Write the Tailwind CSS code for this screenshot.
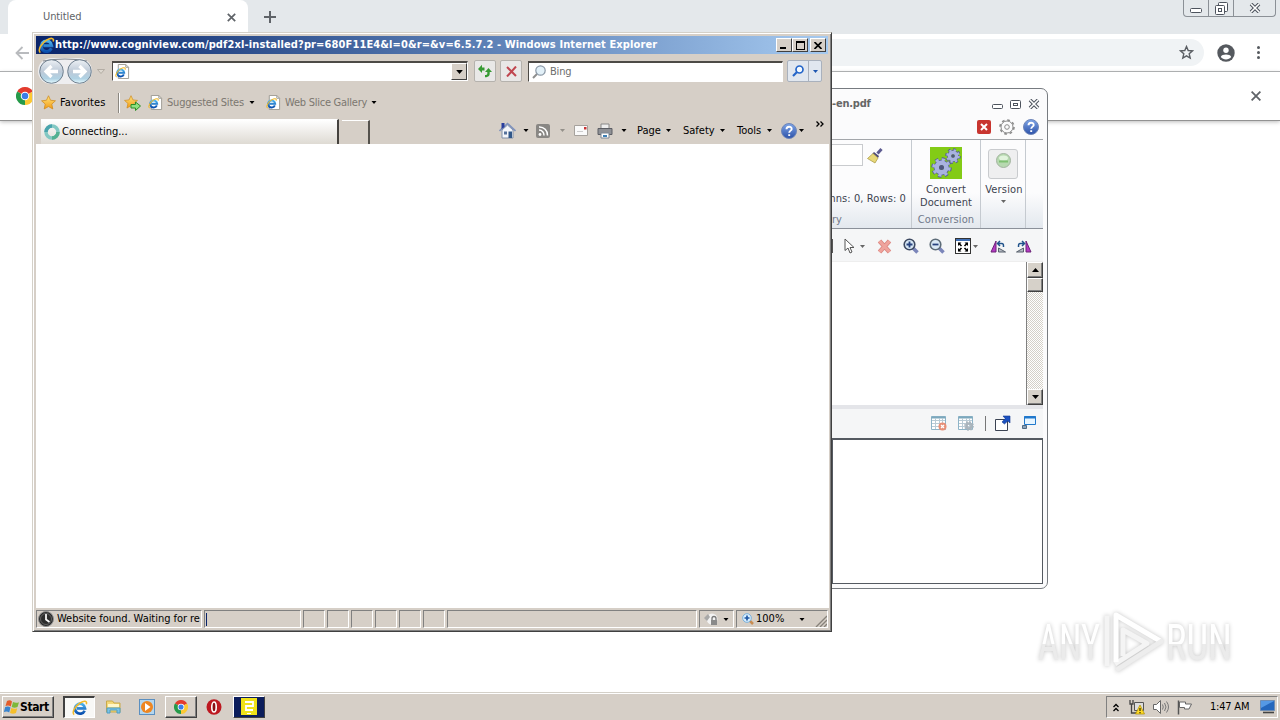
<!DOCTYPE html>
<html lang="en">
<head>
  <meta charset="UTF-8" />
  <meta name="viewport" content="width=device-width, initial-scale=1.0" />
  <title>Desktop</title>
  <script src="https://cdn.jsdelivr.net/npm/@tailwindcss/browser@4"></script>
</head>

<body class="relative w-[1280px] h-[720px] overflow-hidden bg-white text-black whitespace-nowrap font-['DejaVu_Sans_Condensed','DejaVu_Sans',sans-serif] font-stretch-condensed text-[11px] leading-[14px]">

  <!-- Shared icons -->
  <svg class="absolute size-0">
    <defs>
      <linearGradient id="gBlue" x1="0" y1="0" x2="0" y2="1"><stop offset="0" stop-color="#4db4ee" /><stop offset="1" stop-color="#0a4fae" /></linearGradient>
      <linearGradient id="gNav" x1="0" y1="0" x2="0" y2="1"><stop offset="0" stop-color="#edf1f5" /><stop offset=".5" stop-color="#bdc9d7" /><stop offset=".8" stop-color="#b0d2e4" /><stop offset="1" stop-color="#e6fbff" /></linearGradient>
      <linearGradient id="gStar" x1="0" y1="0" x2="0" y2="1"><stop offset="0" stop-color="#ffe680" /><stop offset="1" stop-color="#f39a12" /></linearGradient>
      <linearGradient id="gHelp" x1="0" y1="0" x2="0" y2="1"><stop offset="0" stop-color="#7ea5e8" /><stop offset="1" stop-color="#2c51a8" /></linearGradient>
      <symbol id="e" viewBox="0 0 16 16">
        <path d="M12.6 10.7A5 5 0 1 1 13 8.3H5" fill="none" stroke="url(#gBlue)" stroke-width="2.8" />
        <path d="M2.2 14.6C-.5 12.500 3 6 8 3c4-2.400 7.500-2.400 6.300 1.200" fill="none" stroke="#f0b92a" stroke-width="1.500" />
      </symbol>
      <symbol id="page-e" viewBox="0 0 16 16">
        <path d="M3.500.5h8l3 3v12h-11z" fill="#fff" stroke="#9c9a92" />
        <path d="M11.500.5v3h3" fill="none" stroke="#9c9a92" />
        <use href="#e" x="0" y="3" width="12" height="12" />
      </symbol>
      <symbol id="star" viewBox="0 0 16 16">
        <path d="M8 .8l2.200 4.800 5.200.6-3.900 3.500 1.100 5.200L8 12.300l-4.600 2.600 1.100-5.200L.6 6.200l5.200-.6z" fill="url(#gStar)" stroke="#cf8a1c" stroke-width=".8" />
      </symbol>
      <symbol id="chrome" viewBox="0 0 16 16">
        <path d="M8 8L1.070 4A8 8 0 0 1 14.930 4z" fill="#e33b2e" />
        <path d="M8 8L14.930 4A8 8 0 0 1 8 16z" fill="#fcc934" />
        <path d="M8 8v8A8 8 0 0 1 1.070 4z" fill="#269a4a" />
        <circle cx="8" cy="8" r="3.800" fill="#fff" /><circle cx="8" cy="8" r="2.900" fill="#3b7de8" />
      </symbol>
      <symbol id="down" viewBox="0 0 5 3"><path d="M0 0h5L2.500 3z" fill="currentColor" /></symbol>
      <symbol id="help" viewBox="0 0 16 16">
        <circle cx="8" cy="8" r="7.500" fill="url(#gHelp)" stroke="#6f86b8" />
        <path d="M5.500 6.200c0-3.400 5.200-3.200 5.200-.3 0 1.700-2.500 1.800-2.500 3.900M8.200 11.200v1.800" fill="none" stroke="#fff" stroke-width="1.900" />
      </symbol>
      <symbol id="gear" viewBox="0 0 16 16">
        <circle cx="8" cy="8" r="6.600" fill="none" stroke="currentColor" stroke-width="2.400" stroke-dasharray="2.600 2.580" />
        <circle cx="8" cy="8" r="4" fill="none" stroke="currentColor" stroke-width="4" />
      </symbol>
      <symbol id="table" viewBox="0 0 16 16">
        <path d="M.5 1.500h14v13h-14z" fill="#fff" stroke="#8db4c8" />
        <path d="M.5 2.500h14" stroke="#7ca8bd" stroke-width="2" />
        <path d="M1 5.500h13M1 8.500h13M1 11.500h13M4.500 3v11M8.500 3v11M11.500 3v11" stroke="#b9cbd5" />
      </symbol>
    </defs>
  </svg>

  <!-- Browser in the background -->
  <div class="absolute inset-0 flex flex-col">
    <div class="flex h-[34px] bg-[#e4e8eb]">
      <div class="ml-2 flex w-60 items-center rounded-t-lg bg-white pl-[35px] text-[#606367]">
        <span class="w-[184px] tracking-[-0.1px]">Untitled</span>
        <svg class="size-[9px]" viewBox="0 0 9 9"><path d="M.8.8l7.400 7.400M8.200.8L.8 8.200" stroke="#5f6368" stroke-width="1.700" /></svg>
      </div>
      <svg class="mt-[11px] ml-4 size-3" viewBox="0 0 12 12"><path d="M6 0v12M0 6h12" stroke="#5f6368" stroke-width="2" /></svg>
      <!-- Caption buttons -->
      <div class="ml-auto mr-1 flex h-[17px] w-[93px] rounded-b border border-t-0 border-[#8b9096]">
        <div class="flex w-[25px] items-end justify-center border-r border-[#8b9096] pb-[3px]"><svg class="h-[5px] w-3" viewBox="0 0 12 5"><rect x=".5" y=".5" width="11" height="4" rx="1" fill="#fff" stroke="#4d535d" /></svg></div>
        <div class="flex w-[25px] items-center justify-center border-r border-[#8b9096]"><svg class="size-[13px]" viewBox="0 0 13 13" fill="#fff" stroke="#4d535d"><rect x="3.500" y=".5" width="9" height="9" rx="1" /><rect x=".5" y="3.500" width="9" height="9" rx="1" /><rect x="3.500" y="6.500" width="3" height="3" /></svg></div>
        <div class="flex flex-1 items-center justify-center"><svg class="h-[10px] w-3" viewBox="0 0 12 10"><path d="M2 1l8 8M10 1L2 9" stroke="#4d535d" stroke-width="3.600" /><path d="M2 1l8 8M10 1L2 9" stroke="#fff" stroke-width="1.600" /></svg></div>
      </div>
    </div>
    <div class="flex h-[38px] items-center border-b border-[#a9abad] bg-white pl-[15px]">
      <svg class="h-[14px] w-[14px]" viewBox="0 0 14 14"><path d="M14 7H1.500M7.500 1L1.500 7l6 6" fill="none" stroke="#b9bbbe" stroke-width="1.800" /></svg>
      <div class="ml-20 flex h-[27px] flex-1 items-center justify-end rounded-full bg-[#f0f3f5] pr-[10px]">
        <svg class="size-[15px]" viewBox="0 0 15 15"><path d="M7.500 1.500l1.700 4 4.300.4-3.300 2.900 1 4.300-3.700-2.300-3.700 2.300 1-4.300L1.500 5.900l4.300-.4z" fill="none" stroke="#5a5e63" stroke-width="1.400" /></svg>
      </div>
      <svg class="ml-[13px] size-[18px]" viewBox="0 0 18 18"><circle cx="9" cy="9" r="8.700" fill="#55595e" /><circle cx="9" cy="6.300" r="2.700" fill="#fff" /><path d="M3.800 12.900c1-3.200 9.400-3.200 10.400 0-2.400 3.300-8 3.300-10.400 0z" fill="#fff" /></svg>
      <svg class="mr-5 ml-[22px] h-[13px] w-[3px]" viewBox="0 0 3 13" fill="#55595e"><circle cx="1.500" cy="1.500" r="1.500" /><circle cx="1.500" cy="6.500" r="1.500" /><circle cx="1.500" cy="11.500" r="1.500" /></svg>
    </div>
    <div class="flex h-[49px] items-center border-b border-[#929292] bg-white pl-4 shadow-[0_1px_4px_#bbb]">
      <svg class="size-[18px]"><use href="#chrome" /></svg>
      <svg class="mr-[19px] ml-auto size-[10px]" viewBox="0 0 10 10"><path d="M.6.6l8.800 8.800M9.400.6L.6 9.400" stroke="#5f6368" stroke-width="1.800" /></svg>
    </div>
  </div>

  <!-- PDF converter window -->
  <section class="absolute top-[88px] left-[800px] flex h-[501px] w-[248px] flex-col rounded-[7px] border border-[#777b80] bg-[#fbfbfc] pl-[31px] text-[#3c4350]">
    <div class="flex h-[29px] items-center pt-px text-[#666]">
      <span class="w-[160px] font-bold tracking-[-0.2px]">-en.pdf</span>
      <svg class="mt-1 h-[5px] w-[11px]" viewBox="0 0 11 5"><rect x=".5" y=".5" width="10" height="4" rx="1" fill="#fff" stroke="#4d535d" /></svg>
      <svg class="ml-[7px] h-[9px] w-[11px]" viewBox="0 0 11 9" fill="#fff" stroke="#4d535d"><rect x=".5" y=".5" width="10" height="8" rx="1" /><rect x="3.500" y="3.500" width="4" height="2" /></svg>
      <svg class="ml-[7px] h-[10px] w-[12px]" viewBox="0 0 12 10"><path d="M2 1l8 8M10 1L2 9" stroke="#4d535d" stroke-width="3.600" /><path d="M2 1l8 8M10 1L2 9" stroke="#fff" stroke-width="1.600" /></svg>
    </div>
    <div class="mr-1 flex h-[22px] items-center border-b border-[#a3a6aa] pb-1 pl-[145px]">
      <svg class="h-[14px] w-[14px]" viewBox="0 0 14 14"><rect width="14" height="14" rx="2" fill="#c8352f" /><path d="M4 4l6 6M10 4l-6 6" stroke="#fff" stroke-width="2" /></svg>
      <svg class="ml-2 size-4" viewBox="0 0 16 16" fill="none" stroke="#8a8a8a"><circle cx="8" cy="8" r="7" stroke-width="1.600" stroke-dasharray="2.750 2.750" /><circle cx="8" cy="8" r="6" /><circle cx="8" cy="8" r="2.300" /></svg>
      <svg class="ml-2 size-4"><use href="#help" /></svg>
    </div>
    <!-- Ribbon -->
    <div class="mr-1 flex h-[89px] border-b border-[#8b9099] bg-linear-to-b from-[#fcfcfd] from-60% to-[#e3e8ee]">
      <div class="flex w-[80px] flex-col border-r border-[#c5cad0]">
        <div class="flex h-[47px] items-start pt-1">
          <div class="h-[22px] w-[31px] border border-l-0 border-[#c9cbce] bg-white"></div>
          <svg class="mt-1 ml-1 size-4" viewBox="0 0 16 16"><path d="M10.500 5.500l4-4.500" stroke="#5c5a90" stroke-width="3" /><path d="M7 4l5 4-1 2-5.500-4.500z" fill="#4f4a78" /><path d="M6 5.500l5 4.500-3 5-7.500-4.500z" fill="#e8d878" stroke="#a59540" stroke-width=".7" /></svg>
        </div>
        <div class="flex h-[24px] justify-end pt-[5px] pr-[5px]"><span class="tracking-[0.1px]">Columns: 0, Rows: 0</span></div>
        <span class="mt-[2px] text-[#71798a]">ry</span>
      </div>
      <div class="flex w-[69px] flex-col items-center border-r border-[#c5cad0] pt-[7px]">
        <svg class="size-8 bg-[#83cb16] text-[#a9b3e0]" viewBox="0 0 32 32"><use href="#gear" x="1" y="10" width="21" height="21" color="#555d92" /><use href="#gear" x="2" y="11" width="19" height="19" /><circle cx="11.500" cy="20.500" r="2.500" fill="#4f5680" /><use href="#gear" x="15" y="1" width="16" height="16" color="#555d92" /><use href="#gear" x="16" y="2" width="14" height="14" /><circle cx="23" cy="9" r="1.800" fill="#4f5680" /></svg>
        <span class="mt-[4px] text-center leading-[13px] tracking-[0.1px]">Convert<br />Document</span>
        <span class="mt-[4px] tracking-[0.1px] text-[#71798a]">Conversion</span>
      </div>
      <div class="flex w-[45px] flex-col items-center border-r border-[#c5cad0] pt-[9px]">
        <div class="flex h-[30px] w-[30px] justify-center rounded-[3px] border border-[#c9cbce] bg-[#efeff0] pt-[3px]"><svg class="size-[15px]" viewBox="0 0 15 15"><circle cx="7.500" cy="7.500" r="7" fill="#b7d9b0" stroke="#a3b3a0" /><ellipse cx="7.500" cy="5" rx="4.500" ry="2.500" fill="#e1f3dc" /><path d="M3 8.500h9" stroke="#7fc072" stroke-width="2" /></svg></div>
        <span class="mt-[4px] ml-[2px] leading-[13px] tracking-[0.2px]">Version</span>
        <svg class="mt-1 h-[3px] w-[5px] text-[#666]"><use href="#down" /></svg>
      </div>
      <div class="flex-1"></div>
    </div>
    <!-- View tools -->
    <div class="mr-1 flex h-[33px] items-center border-b border-[#eee] bg-[#f5f6f7] pt-[2px]">
      <div class="h-[14px] w-px bg-[#555]"></div>
      <svg class="ml-[11px] h-4 w-[12px]" viewBox="0 0 12 16"><path d="M1 1v11.500l3-2.500 2 5 2-1-2-4.500h4z" fill="#fff" stroke="#555" /></svg>
      <svg class="ml-1 h-[3px] w-[5px] text-[#666]"><use href="#down" /></svg>
      <svg class="ml-[12px] size-[15px]" viewBox="0 0 15 15"><path d="M2.500 2l10 11M12.500 2l-10 11" stroke="#d98680" stroke-width="4.600" /><path d="M2.500 2l10 11M12.500 2l-10 11" stroke="#efa39c" stroke-width="3" /></svg>
      <svg class="ml-[11px] size-4" viewBox="0 0 16 16"><path d="M10 10l4.500 4.500" stroke="#7b86ba" stroke-width="3.500" /><circle cx="6.500" cy="6.500" r="5.300" fill="#d9e9f6" stroke="#3e4a62" stroke-width="1.600" /><path d="M3.500 6.500h6M6.500 3.500v6" stroke="#27427e" stroke-width="1.800" /></svg>
      <svg class="ml-[10px] size-4" viewBox="0 0 16 16"><path d="M10 10l4.500 4.500" stroke="#7b86ba" stroke-width="3.500" /><circle cx="6.500" cy="6.500" r="5.300" fill="#d9e9f6" stroke="#5d6c78" stroke-width="1.600" /><path d="M3.500 6.500h6" stroke="#27427e" stroke-width="1.800" /></svg>
      <svg class="ml-[10px] size-4" viewBox="0 0 16 16"><rect x=".5" y=".5" width="15" height="15" fill="#fff" stroke="#333" /><path d="M1 2h14" stroke="#3f6fb5" stroke-width="2" /><path d="M3 4.500h3.500L3 8zM13 4.500H9.500L13 8zM3 13.500h3.500L3 10zM13 13.500H9.500L13 10z" fill="#000" /><path d="M3.500 5l3 3M12.500 5l-3 3M3.500 13l3-3M12.500 13l-3-3" stroke="#000" stroke-width="1.600" /></svg>
      <svg class="ml-[2px] h-[3px] w-[5px] text-[#666]"><use href="#down" /></svg>
      <svg class="ml-[12px] h-[13px] w-4" viewBox="0 0 16 13"><path d="M6 1v11H1z" fill="#b53ac4" stroke="#6b2477" /><path d="M8.500 12h7l-7-4z" fill="#b6bcc5" stroke="#59616d" /><path d="M8 3.500h3.500c2 0 2 1 2 3.500M10 1L7.500 3.500 10 6" fill="none" stroke="#21538b" stroke-width="1.500" /></svg>
      <svg class="ml-[10px] h-[13px] w-4" viewBox="0 0 16 13"><path d="M10 1v11h5z" fill="#b53ac4" stroke="#6b2477" /><path d="M7.500 12h-7l7-4z" fill="#b6bcc5" stroke="#59616d" /><path d="M8 3.500H4.500c-2 0-2 1-2 3.500M6 1l2.500 2.500L6 6" fill="none" stroke="#21538b" stroke-width="1.500" /></svg>
    </div>
    <div class="mr-1 flex h-[143px] bg-white">
      <div class="ml-auto flex w-[17px] flex-col justify-between border-l border-[#808080] bg-[repeating-conic-gradient(#d4d0c8_0_25%,#ffffff_0_50%)] bg-[length:2px_2px]">
        <div>
          <div class="flex h-4 items-center justify-center border border-t-white border-r-[#404040] border-b-[#404040] border-l-white bg-[#d6d1c9] shadow-[inset_-1px_-1px_#808080]"><svg class="h-1 w-[7px]" viewBox="0 0 7 4"><path d="M0 4h7L3.500 0z" /></svg></div>
          <div class="h-[14px] border border-t-white border-r-[#404040] border-b-[#404040] border-l-white bg-[#d6d1c9] shadow-[inset_-1px_-1px_#808080]"></div>
        </div>
        <div class="flex h-4 items-center justify-center border border-t-white border-r-[#404040] border-b-[#404040] border-l-white bg-[#d6d1c9] shadow-[inset_-1px_-1px_#808080]"><svg class="h-1 w-[7px]" viewBox="0 0 7 4"><path d="M0 0h7L3.500 4z" /></svg></div>
      </div>
    </div>
    <div class="mr-1 flex h-[33px] items-center border-t-4 border-[#e4e5e9] bg-[#f5f6f7] pb-px pl-[99px]">
      <svg class="size-4" viewBox="0 0 16 16"><use href="#table" width="16" height="16" /><circle cx="11.500" cy="11.500" r="4" fill="#e79078" /><path d="M10 10l3 3M13 10l-3 3" stroke="#fff" stroke-width="1.300" /></svg>
      <svg class="ml-[11px] size-4 text-[#a9b4bc]" viewBox="0 0 16 16"><use href="#table" width="16" height="16" /><use href="#gear" x="6" y="6" width="10" height="10" /></svg>
      <div class="ml-[11px] h-[15px] w-px bg-[#777]"></div>
      <svg class="ml-[9px] size-4" viewBox="0 0 16 16"><path d="M.5 4.500h12v11H.5z" fill="#fff" stroke="#3b4353" /><path d="M8 1h7v7l-2.200-2-3.300 3L7 7l3.200-3.500z" fill="#1c51c0" stroke="#123a91" stroke-width=".6" /></svg>
      <svg class="ml-[11px] size-[14px]" viewBox="0 0 14 14"><path d="M2.500.5h11v8h-11z" fill="#e7f5ff" stroke="#2179cc" /><path d="M2 1.500h12" stroke="#2179cc" stroke-width="2" /><path d="M.5 9.500h4v3h-4z" fill="#8ba5bc" stroke="#526b82" /></svg>
    </div>
    <div class="mr-1 h-[146px] border border-t-2 border-[#555a61] bg-white"></div>
  </section>

  <!-- ANY.RUN watermark -->
  <div class="absolute top-[606px] left-[1036px] flex h-[72px] w-[204px] items-center">
    <svg class="h-[72px] w-[204px] drop-shadow-[0_0_2px_#c4c4c4]" viewBox="0 0 204 72">
      <defs><linearGradient id="wm" x1="0" y1="0" x2="0" y2="1"><stop offset=".52" stop-color="#fff" /><stop offset=".52" stop-color="#ebebeb" /></linearGradient></defs>
      <g fill="url(#wm)" font-family="Roboto" font-weight="400" font-size="50">
        <text x="2" y="54" textLength="62" lengthAdjust="spacingAndGlyphs">ANY</text>
        <text x="130" y="54" textLength="66" lengthAdjust="spacingAndGlyphs">RUN</text>
      </g>
      <path d="M67 60V9.500M83 50V24L107 37.500 75 58" fill="none" stroke="#f4f4f4" stroke-width="5" stroke-linejoin="round" transform="translate(4 0)" />
      <path d="M80 56V9L125 35.500" fill="none" stroke="#fff" stroke-width="5" stroke-linejoin="round" />
      <path d="M125 35.500L82 63" fill="none" stroke="#ededed" stroke-width="5" stroke-linecap="round" />
    </svg>
  </div>

  <!-- Internet Explorer window -->
  <section class="absolute top-[32px] left-[32px] flex h-[600px] w-[800px] flex-col border border-t-[#d4d0c8] border-r-[#404040] border-b-[#404040] border-l-[#d4d0c8] bg-[#d6cfc7] p-[3px] shadow-[inset_1px_1px_#ffffff,inset_-1px_-1px_#808080]">
    <div class="flex h-[18px] shrink-0 items-center bg-linear-to-r from-[#0a246a] to-[#a6caf0] pr-[2px] pl-[2px] text-white">
      <svg class="size-[17px]"><use href="#e" /></svg>
      <span class="font-bold tracking-[0.115px]">http://www.cogniview.com/pdf2xl-installed?pr=680F11E4&amp;l=0&amp;r=&amp;v=6.5.7.2 - Windows Internet Explorer</span>
      <div class="ml-auto flex text-black">
        <div class="flex h-[14px] w-4 items-end border border-t-white border-r-[#404040] border-b-[#404040] border-l-white bg-[#d6cfc7] pb-[2px] pl-[3px]"><div class="h-[2px] w-[6px] bg-black"></div></div>
        <div class="flex h-[14px] w-4 items-center justify-center border border-t-white border-r-[#404040] border-b-[#404040] border-l-white bg-[#d6cfc7]"><div class="h-[9px] w-[9px] border border-t-2 border-black"></div></div>
        <div class="ml-[2px] flex h-[14px] w-4 items-center justify-center border border-t-white border-r-[#404040] border-b-[#404040] border-l-white bg-[#d6cfc7]"><svg class="h-[7px] w-2" viewBox="0 0 8 7"><path d="M.5 0l7 7M7.500 0l-7 7" stroke="#000" stroke-width="1.700" /></svg></div>
      </div>
    </div>

    <!-- Address row -->
    <div class="flex h-[34px] shrink-0 items-center pl-[2px]">
      <svg class="h-[27px] w-[54px]" viewBox="0 0 54 27">
        <rect x="0" y="0" width="54" height="26" rx="13" fill="#eeeef0" /><path d="M5 3Q27 -1 49 3" fill="none" stroke="#85888e" />
        <circle cx="13.500" cy="13.500" r="11.800" fill="url(#gNav)" stroke="#70808f" /><circle cx="41.500" cy="13.500" r="11.800" fill="url(#gNav)" stroke="#70808f" />
        <path d="M20 13.500H9M13.500 8L8 13.500l5.500 5.500M35 13.500h11M41.500 8l5.500 5.500-5.500 5.500" fill="none" stroke="#fff" stroke-width="3.300" />
      </svg>
      <svg class="ml-[5px] h-[5px] w-2" viewBox="0 0 8 5"><path d="M.5.5h7L4 4.500z" fill="#ddd8d0" stroke="#a9a39b" stroke-width=".8" /></svg>
      <div class="ml-[7px] flex h-[20px] w-[356px] items-center border border-t-2 border-t-[#4d4a46] border-r-white border-b-white border-l-[#4d4a46] bg-white pl-[2px]">
        <svg class="size-[15px]"><use href="#page-e" /></svg>
        <div class="ml-auto flex h-[17px] w-4 items-center justify-center border border-t-white border-r-[#404040] border-b-[#404040] border-l-white bg-[#d6cfc7]"><svg class="h-1 w-[7px]"><use href="#down" /></svg></div>
      </div>
      <div class="ml-[6px] flex size-[22px] items-center justify-center rounded-[2px] border border-[#b5b2ad] bg-[#e9e8e7]"><svg class="h-[14px] w-4" viewBox="0 0 16 14"><path d="M1 5L5 .8V3.500h2.500v3H5V9z" fill="#379a33" /><path d="M15 8L11.500 4 8 8h2.300v1.500c0 1-.8 1.500-2.300 1.500v2.200c3.500 0 4.700-1.500 4.700-3.700V8z" fill="#379a33" /></svg></div>
      <div class="ml-[4px] flex size-[22px] items-center justify-center rounded-[2px] border border-[#b5b2ad] bg-[#e9e8e7]"><svg class="size-[11px]" viewBox="0 0 11 11"><path d="M1 1l9 9M10 .5l-9 10" stroke="#c04750" stroke-width="2" /></svg></div>
      <div class="ml-[6px] flex h-[21px] w-[255px] items-center border border-t-2 border-t-[#4d4a46] border-r-white border-b-white border-l-[#4d4a46] bg-white pl-[3px] text-[#6d6d6d]">
        <svg class="size-[14px]" viewBox="0 0 14 14"><path d="M5 9L1 13" stroke="#8e8e8e" stroke-width="2" /><circle cx="8.500" cy="5.500" r="4.700" fill="#e2f0f8" stroke="#8b98a6" stroke-width="1.200" /></svg>
        <span class="ml-1 tracking-[-0.2px]">Bing</span>
      </div>
      <div class="ml-[4px] flex h-[22px] w-[35px] rounded-[2px] border border-[#a9b1bd] bg-[#e1e7ef]">
        <div class="flex w-[21px] items-center justify-center border-r border-[#a9b1bd]"><svg class="size-3" viewBox="0 0 12 12"><path d="M5 7L1 11" stroke="#2465c9" stroke-width="2.200" /><circle cx="7.500" cy="4.500" r="3.500" fill="#f4faff" stroke="#2465c9" stroke-width="1.700" /></svg></div>
        <div class="flex flex-1 items-center justify-center text-[#1d56b0]"><svg class="h-[3px] w-[5px]"><use href="#down" /></svg></div>
      </div>
    </div>

    <!-- Favorites row -->
    <div class="flex h-[28px] shrink-0 items-center pt-px pl-[5px] text-[#7c7770]">
      <svg class="size-[15px]"><use href="#star" /></svg>
      <span class="ml-[4px] w-[58px] tracking-[0.1px] text-black">Favorites</span>
      <div class="h-5 w-[2px] border-l border-[#8b8780] bg-white"></div>
      <svg class="ml-[4px] h-4 w-[17px]" viewBox="0 0 17 16"><use href="#star" width="14" height="14" /><path d="M7 9.500h4.500V7l5 4-5 4.500V13H7z" fill="#8fe080" stroke="#2d8d26" /></svg>
      <svg class="ml-[7px] size-[15px]"><use href="#page-e" /></svg>
      <span class="ml-[4px] w-[82px] tracking-[-0.2px]">Suggested Sites</span>
      <svg class="h-[3px] w-[6px] text-black"><use href="#down" /></svg>
      <svg class="ml-[11px] size-[15px]"><use href="#page-e" /></svg>
      <span class="ml-[4px] w-[86px] tracking-[-0.25px]">Web Slice Gallery</span>
      <svg class="h-[3px] w-[6px] text-black"><use href="#down" /></svg>
    </div>

    <!-- Tabs and command bar -->
    <div class="flex h-[28px] shrink-0 items-end pl-[5px]">
      <div class="flex h-[25px] w-[298px] items-center border-t border-r-2 border-t-white border-r-[#45423e] bg-linear-to-b from-white to-[#dedad3] pl-[3px]">
        <svg class="size-4" viewBox="0 0 16 16"><circle cx="8" cy="8" r="6" fill="none" stroke="#83c8c3" stroke-width="3.500" /><path d="M2 8a6 6 0 0 1 6-6" fill="none" stroke="#4aa4ad" stroke-width="3.500" /><path d="M14 8a6 6 0 0 1-6 6" fill="none" stroke="#53b091" stroke-width="3.500" /></svg>
        <span class="ml-[2px]">Connecting...</span>
      </div>
      <div class="ml-[3px] h-[24px] w-[28px] border-t border-r-2 border-t-white border-r-[#55524d]"></div>
      <div class="ml-[129px] flex h-[27px] flex-1 items-center">
        <svg class="size-[17px]" viewBox="0 0 17 17"><path d="M3 8v8h11V8L8.500 3z" fill="#f4f6fa" stroke="#8190a8" /><path d="M.5 9L8.500 1.500 16.500 9" fill="none" stroke="#8093bd" stroke-width="1.600" /><path d="M2.500 1h3v4l-3 2z" fill="#293e9e" /><path d="M9.500 9.500h3.500V16H9.500z" fill="#315789" /><path d="M5 9.500h3v3H5z" fill="#56719b" /></svg>
        <svg class="ml-[7px] h-[3px] w-[6px]"><use href="#down" /></svg>
        <svg class="ml-[7px] size-[14px]" viewBox="0 0 14 14"><rect width="14" height="14" rx="2" fill="#898784" /><path d="M3 6a5 5 0 0 1 5 5.500M3 3a8 8 0 0 1 8.500 8.500" fill="none" stroke="#fff" stroke-width="1.500" /><circle cx="4" cy="10.500" r="1.400" fill="#fff" /></svg>
        <svg class="ml-[10px] h-[3px] w-[5px] text-[#94908a]"><use href="#down" /></svg>
        <svg class="ml-[9px] h-[11px] w-[14px]" viewBox="0 0 14 11"><path d="M.5.5h13v10H.5z" fill="#fafafa" stroke="#a6a29d" /><path d="M10 2h2.500v2.500H10z" fill="#c93434" /><path d="M3 6.500h6" stroke="#ccc" /></svg>
        <svg class="ml-[9px] h-4 w-4" viewBox="0 0 16 16"><path d="M4 1h8v5H4z" fill="#eee" stroke="#888" /><path d="M1 5.500h14v6H1z" fill="#8f9196" stroke="#5c5e64" /><path d="M4 10h8v5H4z" fill="#fff" stroke="#7d8794" /><path d="M6 12h4v2H6z" fill="#3d7fb5" /></svg>
        <svg class="ml-[8px] h-[3px] w-[6px]"><use href="#down" /></svg>
        <span class="ml-[10px] w-[29px]">Page</span><svg class="h-[3px] w-[5px]"><use href="#down" /></svg>
        <span class="ml-[12px] w-[37px]">Safety</span><svg class="h-[3px] w-[5px]"><use href="#down" /></svg>
        <span class="ml-[12px] w-[30px]">Tools</span><svg class="h-[3px] w-[5px]"><use href="#down" /></svg>
        <svg class="ml-[9px] size-4"><use href="#help" /></svg>
        <svg class="ml-[2px] h-[3px] w-[5px]"><use href="#down" /></svg>
        <svg class="mt-[-13px] ml-[12px] h-[6px] w-[8px]" viewBox="0 0 8 6"><path d="M.5.5L3 3 .5 5.500M4.500.5L7 3 4.500 5.500" fill="none" stroke="#000" stroke-width="1.300" /></svg>
      </div>
    </div>

    <div class="mr-[-1px] min-h-0 flex-1 bg-white"></div>

    <!-- Status bar -->
    <div class="flex h-[20px] shrink-0 items-end gap-[2px] [&>div]:h-[18px] [&>div]:border [&>div]:border-t-[#808080] [&>div]:border-r-white [&>div]:border-b-white [&>div]:border-l-[#808080]">
      <div class="flex w-[166px] items-center overflow-hidden pl-px">
        <svg class="size-4 shrink-0" viewBox="0 0 16 16"><circle cx="8" cy="8" r="7.500" fill="#2c2c2c" stroke="#8f8f8f" /><path d="M8 3v5.500l3.500 2.500" fill="none" stroke="#fff" stroke-width="1.700" /><circle cx="8" cy="8" r="5.500" fill="none" stroke="#777" stroke-width=".7" /></svg>
        <span class="ml-[3px] tracking-[-0.04px]">Website found. Waiting for re</span>
      </div>
      <div class="flex w-[97px] items-center pl-px"><div class="h-[13px] w-px bg-[#0a246a]"></div></div>
      <div class="w-[22px]"></div>
      <div class="w-[22px]"></div>
      <div class="w-[22px]"></div>
      <div class="w-[22px]"></div>
      <div class="w-[22px]"></div>
      <div class="w-[22px]"></div>
      <div class="w-[250px]"></div>
      <div class="flex w-[35px] items-center pl-1"><svg class="h-[13px] w-[14px]" viewBox="0 0 14 13"><circle cx="8" cy="6" r="5.500" fill="#f3f3f3" /><path d="M0 5l4-4 2 3-3 4z" fill="#a8a8a8" /><path d="M8 7V5.500a2 2 0 0 1 4 0V7" fill="none" stroke="#777" stroke-width="1.300" /><path d="M7 7h6v5H7z" fill="#8a8a8a" /></svg><svg class="ml-[5px] h-[3px] w-[6px]"><use href="#down" /></svg></div>
      <div class="flex flex-1 items-center border-r-0 pl-[5px]"><svg class="size-3" viewBox="0 0 12 12"><path d="M7.500 7.500L11 11" stroke="#c88d53" stroke-width="2.500" /><circle cx="5" cy="5" r="4.300" fill="#d9efff" stroke="#78b0dc" /><path d="M2.500 5h5M5 2.500v5" stroke="#1f58a5" stroke-width="1.700" /></svg><span class="ml-[2px] w-[43px]">100%</span><svg class="h-[3px] w-[6px]"><use href="#down" /></svg><svg class="mt-1 ml-auto size-3" viewBox="0 0 12 12"><path d="M1 12L12 1M5 12l7-7M9 12l3-3" stroke="#87827b" stroke-width="1.400" /></svg></div>
    </div>
  </section>

  <!-- Taskbar -->
  <footer class="absolute inset-x-0 bottom-0 flex h-[28px] items-center border-t border-[#d4d0c8] bg-[#d6cfc7] pl-[2px] shadow-[inset_0_1px_#ffffff]">
    <div class="mt-px flex h-[22px] w-[52px] items-center border border-t-white border-r-[#404040] border-b-[#404040] border-l-white shadow-[inset_-1px_-1px_#808080]">
      <svg class="ml-px h-[14px] w-[15px]" viewBox="0 0 15 14"><path d="M3 1q3-1.500 5 .5L6.800 6.500Q4.500 4.800 1.500 6z" fill="#e35c2a" /><path d="M9 2q3 1.500 6 .2L13.500 7q-3 1.500-5.800 0z" fill="#7db83a" /><path d="M1.200 7q3-1.300 5.300.5L5.200 12.500Q3 11-.1 12z" fill="#3984ce" /><path d="M7.300 8q3 1.500 5.900.2L12 13q-3 1.500-6 0z" fill="#f6bf2b" /></svg>
      <span class="ml-[1px] text-[12px] font-bold tracking-[-0.4px]">Start</span>
    </div>
    <div class="mt-px ml-[9px] flex h-[22px] w-[32px] items-center justify-center border-t-2 border-r border-b border-l-2 border-t-[#404040] border-r-white border-b-white border-l-[#404040] bg-[#f8f8f6]"><svg class="size-4"><use href="#e" /></svg></div>
    <svg class="ml-[11px] size-[15px]" viewBox="0 0 15 15"><path d="M.5 2h6l1.500 2h6v9H.5z" fill="#f3d777" stroke="#c9a94a" /><path d="M2 5h11v3H2z" fill="#fff6c8" /><path d="M1 14V9h13v5h-3v-3H4v3z" fill="#7cc3e5" stroke="#4d9dc5" /></svg>
    <svg class="ml-[18px] size-4" viewBox="0 0 16 16"><rect x=".5" y=".5" width="15" height="15" fill="#b4d6ee" stroke="#5b8fc0" /><circle cx="8" cy="8" r="6" fill="#ee8621" /><path d="M6 4l5.500 4L6 12z" fill="#fff" /></svg>
    <div class="mt-px ml-[10px] flex h-[22px] w-[32px] items-center justify-center border border-t-white border-r-[#404040] border-b-[#404040] border-l-white shadow-[inset_-1px_-1px_#808080]"><svg class="size-[14px]"><use href="#chrome" /></svg></div>
    <svg class="ml-[9px] size-4" viewBox="0 0 16 16"><ellipse cx="8" cy="8" rx="7.500" ry="7.800" fill="#bd1820" /><ellipse cx="8" cy="8" rx="2.200" ry="5" fill="#8a0d12" stroke="#fff" stroke-width="1.600" /></svg>
    <div class="mt-px ml-[11px] flex h-[22px] w-[32px] justify-center border border-t-white border-r-[#404040] border-b-[#404040] border-l-white bg-[#0c1d5b] pt-px"><svg class="h-[18px] w-4" viewBox="0 0 16 18"><path d="M0 0h16v17H0z" fill="#f0e21a" /><path d="M4 4h8v4H5v4h7" fill="none" stroke="#fff" stroke-width="1.800" /><path d="M6 15.500h4" stroke="#fff" /></svg></div>

    <div class="mr-[2px] mt-px ml-auto flex h-[22px] w-[172px] items-center border border-t-[#808080] border-r-white border-b-white border-l-[#808080] pl-[6px]">
      <svg class="h-[9px] w-[6px]" viewBox="0 0 6 9"><path d="M.5 4L3 1.500 5.500 4M.5 8L3 5.500 5.500 8" fill="none" stroke="#000" stroke-width="1.300" /></svg>
      <svg class="ml-[10px] size-4" viewBox="0 0 16 16"><path d="M5.500 3.500h9v8h-9z" fill="#ddd" stroke="#555" /><path d="M1 1v4h3V1M2.500 5v9h6" fill="none" stroke="#444" stroke-width="1.300" /><path d="M11 6l4.500 9h-9z" fill="#ffda26" stroke="#a98a00" stroke-width=".7" /><path d="M11 9v3M11 13v1.300" stroke="#000" /></svg>
      <svg class="ml-2 h-[14px] w-4" viewBox="0 0 16 14" fill="none" stroke="#777"><path d="M.5 4.500h3l4-4v13l-4-4h-3z" fill="#fff" stroke="#666" /><path d="M9.500 4.500q1.500 2.500 0 5M11.500 3q3 4 0 8M13.500 1.500q4 5.500 0 11" /></svg>
      <svg class="ml-[8px] h-[15px] w-4" viewBox="0 0 16 15"><path d="M1.500.5v14" stroke="#555" stroke-width="1.500" /><path d="M2.500 2h6v2h6l-2.500 5H7.500V7.500h-5z" fill="#fff" stroke="#666" /></svg>
      <span class="ml-[17px] w-[50px] tracking-[-0.2px]">1:47 AM</span>
      <svg class="h-[14px] w-[15px]" viewBox="0 0 15 14"><path d="M.5.5h14v10H.5z" fill="#2467bd" stroke="#6f8db3" /><path d="M1 1h13L1 8z" fill="#5599e5" /><path d="M3 12.500h11" stroke="#444" stroke-width="1.600" /></svg>
    </div>
  </footer>
</body>
</html>
